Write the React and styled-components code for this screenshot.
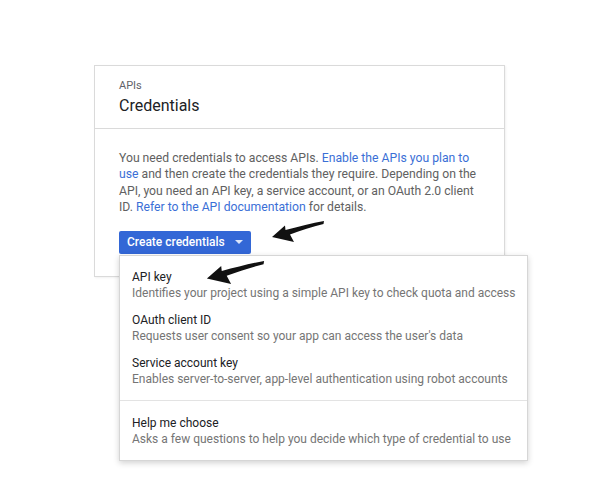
import React from "react";
import styled, { createGlobalStyle } from "styled-components";

const Global = createGlobalStyle`
  html, body { margin: 0; padding: 0; background: #fff; }
  body { font-family: Roboto, "Liberation Sans", Arial, sans-serif; -webkit-font-smoothing: antialiased; }
`;

const Page = styled.div`
  width: 597px;
  height: 487px;
  box-sizing: border-box;
  padding: 65px 0 0 94px;
  position: relative;
  overflow: hidden;
`;

const Card = styled.div`
  width: 411px;
  height: 212px;
  box-sizing: border-box;
  border: 1px solid #dadada;
  box-shadow: 1px 1px 2px rgba(0,0,0,0.06);
  background: #fff;
  display: flex;
  flex-direction: column;
`;

const Header = styled.div`
  height: 63px;
  box-sizing: border-box;
  border-bottom: 1px solid #dadada;
  padding: 13px 0 0 24px;
`;

const Kicker = styled.div`
  font-size: 11px;
  line-height: 14px;
  color: #5f6368;
`;

const Title = styled.div`
  font-size: 16px;
  line-height: 22px;
  color: #202124;
  margin-top: 2px;
`;

const Body = styled.div`
  padding: 21px 24px 0 24px;
`;

const Para = styled.p`
  margin: 0;
  font-size: 12.2px;
  line-height: 16.4px;
  color: #616161;
  width: 360px;
`;

const Link = styled.a`
  color: #3b6fd6;
  text-decoration: none;
`;

const ButtonWrap = styled.div`
  position: relative;
  margin-top: 15px;
  width: 132px;
`;

const Button = styled.button`
  width: 132px;
  height: 23px;
  border: none;
  border-radius: 2px;
  background: #3367d6;
  color: #fff;
  font-family: inherit;
  font-size: 12px;
  font-weight: 500;
  display: flex;
  align-items: center;
  padding: 0 0 0 8px;
  gap: 8px;
  box-sizing: border-box;
`;

const Caret = styled.span`
  width: 0;
  height: 0;
  border-left: 4px solid transparent;
  border-right: 4px solid transparent;
  border-top: 4px solid #dbe5fa;
  margin-left: 2px;
`;

const Menu = styled.div`
  position: absolute;
  left: 0;
  top: 24px;
  width: 409px;
  box-sizing: border-box;
  background: #fff;
  border: 1px solid #d6d6d6;
  box-shadow: 0 2px 6px rgba(0,0,0,0.18);
  padding: 5px 0 10px 0;
  z-index: 2;
`;

const Item = styled.div`
  padding: 8px 12px 4px 12px;
  height: 43px;
  box-sizing: border-box;
`;

const ItemTitle = styled.div`
  font-size: 12px;
  line-height: 16px;
  color: #202124;
`;

const ItemDesc = styled.div`
  font-size: 12px;
  line-height: 17px;
  color: #757575;
  white-space: nowrap;
`;

const Divider = styled.div`
  height: 1px;
  background: #e3e3e3;
  margin: 10px 0 6px 0;
`;

const ArrowSvg = styled.svg`
  position: absolute;
  z-index: 3;
  overflow: visible;
`;

const Arrow = ({ left, top, w = 52, h = 20 }) => (
  <ArrowSvg style={{ left, top }} width={w} height={h} viewBox="0 0 52 20">
    <path
      d="M0 16 L13 4.5 L13.5 9 C27 5.5 40 2 52 0 L51.5 3 C40 5.5 29 9.5 18 13.5 L22 21 Z"
      fill="#111"
    />
  </ArrowSvg>
);

const items = [
  ["API key", "Identifies your project using a simple API key to check quota and access"],
  ["OAuth client ID", "Requests user consent so your app can access the user's data"],
  ["Service account key", "Enables server-to-server, app-level authentication using robot accounts"],
];

export default function App() {
  return (
    <>
      <Global />
      <Page>
        <Card>
          <Header>
            <Kicker>APIs</Kicker>
            <Title>Credentials</Title>
          </Header>
          <Body>
            <Para>
              You need credentials to access APIs.{" "}
              <Link>Enable the APIs you plan to use</Link> and then create the
              credentials they require. Depending on the API, you need an API
              key, a service account, or an OAuth 2.0 client ID.{" "}
              <Link>Refer to the API documentation</Link> for details.
            </Para>
            <ButtonWrap>
              <Button>
                Create credentials <Caret />
              </Button>
              <Menu>
                {items.map(([t, d]) => (
                  <Item key={t}>
                    <ItemTitle>{t}</ItemTitle>
                    <ItemDesc>{d}</ItemDesc>
                  </Item>
                ))}
                <Divider />
                <Item>
                  <ItemTitle>Help me choose</ItemTitle>
                  <ItemDesc>Asks a few questions to help you decide which type of credential to use</ItemDesc>
                </Item>
              </Menu>
            </ButtonWrap>
          </Body>
        </Card>
        <Arrow left={272} top={221} />
        <Arrow left={205} top={261} w={61} h={22} />
      </Page>
    </>
  );
}
